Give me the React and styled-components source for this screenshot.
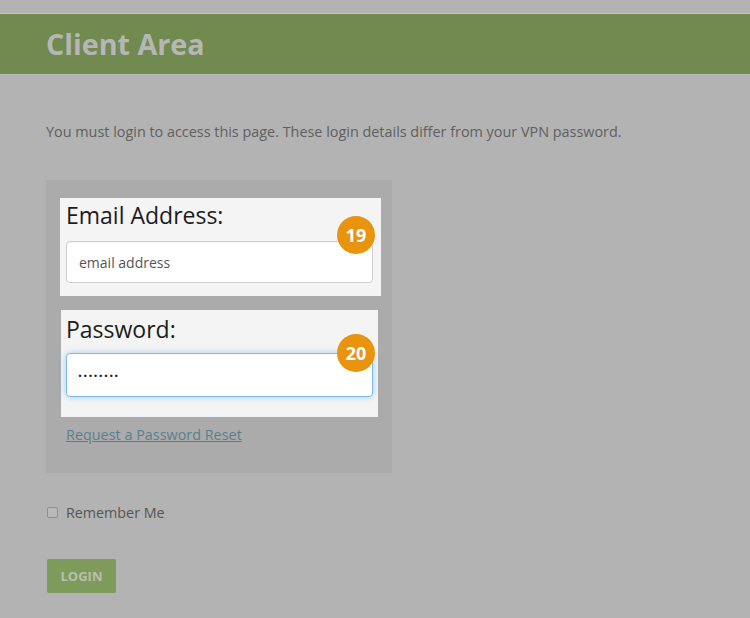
import React from "react";
import styled, { createGlobalStyle } from "styled-components";

const Global = createGlobalStyle`
  html, body { margin: 0; padding: 0; background: #b3b3b3; }
  body { font-family: "Open Sans", "Liberation Sans", sans-serif; }
  * { box-sizing: border-box; }
`;

const Page = styled.div`
  width: 750px;
  min-height: 618px;
  background: #b3b3b3;
  padding-top: 13px;
`;

const Header = styled.header`
  height: 62px;
  background: #718a4f;
  border-top: 1px solid #c6c6c6;
  border-bottom: 1px solid #bababa;
  display: flex;
  align-items: center;
  padding-left: 46px;
`;

const Title = styled.h1`
  margin: 1px 0 0;
  font-size: 28.7px;
  font-weight: 700;
  color: #b6b6b6;
  line-height: 1;
`;

const Main = styled.main`
  padding: 0 46px;
`;

const Intro = styled.p`
  margin: 47px 0 0;
  font-size: 14.4px;
  line-height: 20px;
  color: #5f5f5f;
`;

const FormBox = styled.div`
  margin-top: 38px;
  width: 346px;
  background: #ababab;
  padding: 18px 0 28px 14px;
`;

const FieldBlock = styled.div`
  position: relative;
  width: ${(p) => p.$w}px;
  margin-left: ${(p) => p.$ml || 0}px;
  margin-top: ${(p) => p.$mt || 0}px;
  background: #f4f4f4;
  padding: ${(p) => p.$pt}px ${(p) => p.$pr}px ${(p) => p.$pb}px ${(p) => p.$pl}px;
`;

const Label = styled.label`
  display: block;
  font-size: 23px;
  line-height: 30px;
  color: #1c1c1c;
  margin-bottom: ${(p) => p.$mb}px;
`;

const Input = styled.input`
  display: block;
  width: 307px;
  height: ${(p) => p.$h}px;
  border-radius: 4px;
  background: #fff;
  border: 1px solid ${(p) => (p.$focus ? "#7dbbec" : "#cfcfcf")};
  box-shadow: ${(p) =>
    p.$focus ? "0 0 6px rgba(102,175,233,0.55)" : "inset 0 1px 1px rgba(0,0,0,0.05)"};
  padding: 0 12px;
  font-family: "Open Sans", "Liberation Sans", sans-serif;
  font-size: 14px;
  color: #333;
  outline: none;
  &::placeholder { color: #555; opacity: 1; }
`;

const Dots = styled(Input)`
  font-weight: 700;
  letter-spacing: 1.2px;
  color: #222;
  padding-left: 11px;
`;

const Badge = styled.span`
  position: absolute;
  left: ${(p) => p.$x}px;
  top: ${(p) => p.$y}px;
  width: 38px;
  height: 38px;
  border-radius: 50%;
  background: #e8940f;
  color: #fff;
  font-size: 18px;
  font-weight: 700;
  display: flex;
  align-items: center;
  justify-content: center;
  line-height: 1;
  z-index: 2;
`;

const ResetLink = styled.a`
  display: block;
  margin: 8px 0 0 6px;
  font-size: 14.4px;
  line-height: 20px;
  color: #5b7f8f;
  text-decoration: underline;
`;

const CheckRow = styled.label`
  display: flex;
  align-items: center;
  gap: 8px;
  margin-top: 29px;
  margin-left: 1px;
  height: 20px;
  font-size: 14.3px;
  color: #555;
`;

const Check = styled.input`
  appearance: none;
  margin: 0;
  width: 11px;
  height: 11px;
  border: 1px solid #8f8f8f;
  border-radius: 2px;
  background: #b9b9b9;
`;

const LoginButton = styled.button`
  display: block;
  margin: 37px 0 0 1px;
  width: 69px;
  height: 34px;
  border: none;
  border-radius: 2px;
  background: #7f9b5b;
  color: #b8c0ad;
  font-family: "Open Sans", "Liberation Sans", sans-serif;
  font-size: 13px;
  font-weight: 700;
  padding: 0;
`;

export default function App() {
  return (
    <Page>
      <Global />
      <Header>
        <Title>Client Area</Title>
      </Header>
      <Main>
        <Intro>
          You must login to access this page. These login details differ from your VPN password.
        </Intro>
        <FormBox>
          <FieldBlock $w={321} $pt={2} $pr={8} $pb={13} $pl={6}>
            <Label $mb={11}>Email Address:</Label>
            <Input $h={42} placeholder="email address" readOnly />
            <Badge $x={277} $y={18}>19</Badge>
          </FieldBlock>
          <FieldBlock $w={317} $ml={1} $mt={14} $pt={4} $pr={5} $pb={20} $pl={5}>
            <Label $mb={9}>Password:</Label>
            <Dots $h={44} $focus value="········" readOnly />
            <Badge $x={276} $y={24}>20</Badge>
          </FieldBlock>
          <ResetLink href="#">Request a Password Reset</ResetLink>
        </FormBox>
        <CheckRow>
          <Check type="checkbox" />
          Remember Me
        </CheckRow>
        <LoginButton>LOGIN</LoginButton>
      </Main>
    </Page>
  );
}
